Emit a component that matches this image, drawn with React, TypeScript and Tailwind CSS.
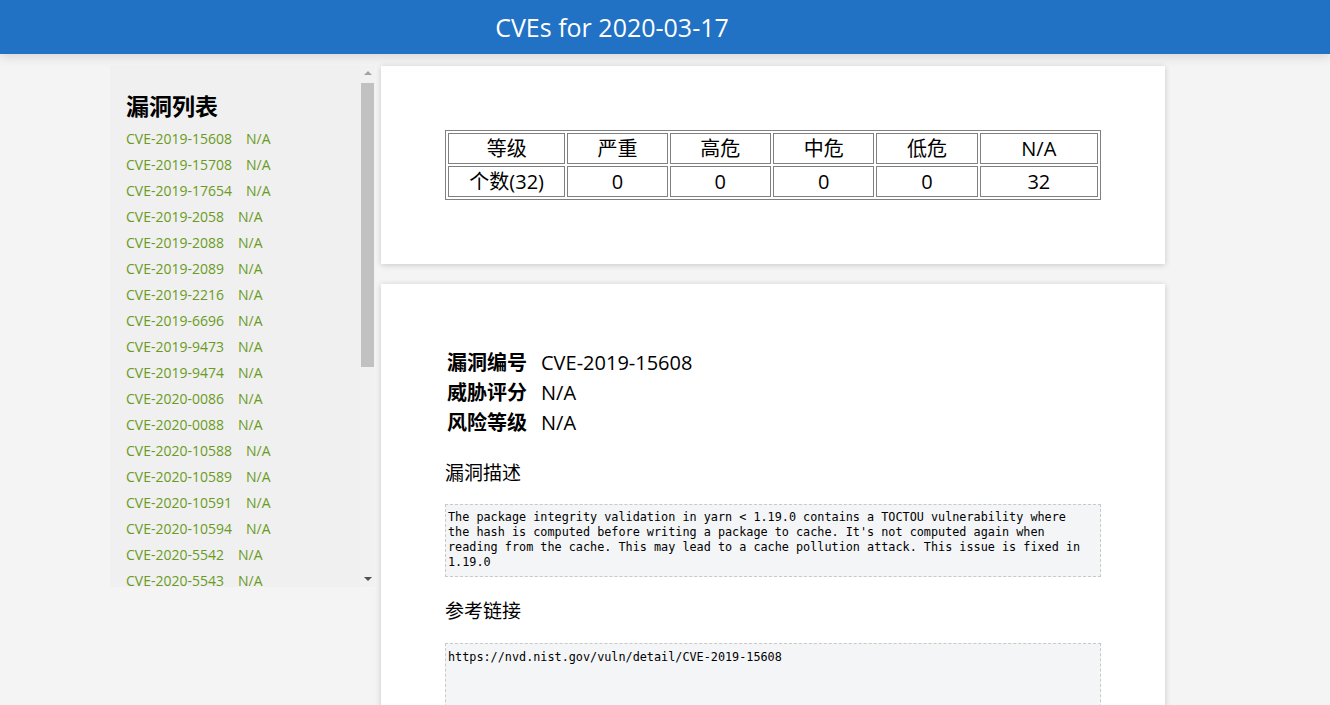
const SANS = 'font-["Open_Sans","Noto_Sans_CJK_SC",sans-serif]';

const CVES = [
  'CVE-2019-15608',
  'CVE-2019-15708',
  'CVE-2019-17654',
  'CVE-2019-2058',
  'CVE-2019-2088',
  'CVE-2019-2089',
  'CVE-2019-2216',
  'CVE-2019-6696',
  'CVE-2019-9473',
  'CVE-2019-9474',
  'CVE-2020-0086',
  'CVE-2020-0088',
  'CVE-2020-10588',
  'CVE-2020-10589',
  'CVE-2020-10591',
  'CVE-2020-10594',
  'CVE-2020-5542',
  'CVE-2020-5543',
];

const LEVELS = ['等级', '严重', '高危', '中危', '低危', 'N/A'];
const COUNTS = ['个数(32)', '0', '0', '0', '0', '32'];
const COL_W = ['w-[118px]', 'w-[101px]', 'w-[102px]', 'w-[102px]', 'w-[102px]', 'w-[119px]'];

const DESCRIPTION = `The package integrity validation in yarn < 1.19.0 contains a TOCTOU vulnerability where
the hash is computed before writing a package to cache. It's not computed again when
reading from the cache. This may lead to a cache pollution attack. This issue is fixed in
1.19.0`;

function Sidebar() {
  return (
    <aside className="flex h-[521px] w-[265px] shrink-0 overflow-hidden bg-[#f0f0f0]">
      <div className="min-w-0 flex-1 overflow-hidden pl-4 pt-[24px]">
        <h2 className="text-[23px] font-bold leading-[32px] text-black">漏洞列表</h2>
        <ul className="mt-[4px]">
          {CVES.map((id) => (
            <li key={id} className="h-[26px] text-[14px] leading-[26px] text-[#6a9b1e]">
              {id}
              <span className="ml-[14px]">N/A</span>
            </li>
          ))}
        </ul>
      </div>
      {/* fake scrollbar */}
      <div className="flex w-[15px] shrink-0 flex-col items-center bg-[#f1f1f1]">
        <span className="mt-[5px] h-0 w-0 border-x-[4px] border-b-[4px] border-x-transparent border-b-[#a3a3a3]" />
        <span className="mt-[8px] h-[284px] w-[13px] bg-[#c1c1c1]" />
        <span className="mt-auto mb-[6px] h-0 w-0 border-x-[4px] border-t-[4px] border-x-transparent border-t-[#505050]" />
      </div>
    </aside>
  );
}

function SummaryCard() {
  return (
    <section className="bg-white px-16 py-16 shadow-[0_1px_6px_rgba(0,0,0,0.18)]">
      <table className="border-separate border-spacing-[2px] border border-[#808080] text-[20px] leading-[29px] text-black">
        <tbody>
          <tr>
            {LEVELS.map((t, i) => (
              <td key={t} className={`${COL_W[i]} border border-[#808080] p-0 text-center`}>
                {t}
              </td>
            ))}
          </tr>
          <tr>
            {COUNTS.map((t, i) => (
              <td key={i} className={`${COL_W[i]} border border-[#808080] p-0 text-center`}>
                {t}
              </td>
            ))}
          </tr>
        </tbody>
      </table>
    </section>
  );
}

function DetailCard() {
  const rows = [
    ['漏洞编号', 'CVE-2019-15608'],
    ['威胁评分', 'N/A'],
    ['风险等级', 'N/A'],
  ];
  return (
    <section className="bg-white px-16 pt-16 pb-10 shadow-[0_1px_6px_rgba(0,0,0,0.18)]">
      <div className="ml-[2px] text-[20px] leading-[30px] text-black">
        {rows.map(([k, v]) => (
          <div key={k} className="flex">
            <span className="w-[94px] font-bold">{k}</span>
            <span>{v}</span>
          </div>
        ))}
      </div>

      <h3 className="mt-[22px] text-[19px] leading-[26px] text-black">漏洞描述</h3>
      <pre className='mt-[18px] whitespace-pre-wrap border border-dashed border-[#c9c9c9] bg-[#f4f5f7] px-[2px] pt-[5px] pb-[6px] font-["DejaVu_Sans_Mono",monospace] text-[11.8px] leading-[15px] text-black'>
        {DESCRIPTION}
      </pre>

      <h3 className="mt-[21px] text-[19px] leading-[26px] text-black">参考链接</h3>
      <pre className='mt-[19px] h-[90px] whitespace-pre-wrap border border-dashed border-[#c9c9c9] bg-[#f4f5f7] px-[2px] pt-[6px] font-["DejaVu_Sans_Mono",monospace] text-[11.8px] leading-[15px] text-black'>
        https://nvd.nist.gov/vuln/detail/CVE-2019-15608
      </pre>
    </section>
  );
}

export default function App() {
  return (
    <div className={`min-h-screen bg-[#f4f4f4] ${SANS}`}>
      <header className="relative z-10 flex h-[54px] items-center justify-center bg-[#2172c4] pr-[106px] shadow-[0_3px_10px_rgba(0,0,0,0.12)]">
        <h1 className="text-[25px] leading-none text-white">CVEs for 2020-03-17</h1>
      </header>

      <div className="ml-[110px] flex w-[1055px] gap-[6px] pt-3">
        <Sidebar />
        <main className="flex w-[784px] flex-col gap-5">
          <SummaryCard />
          <DetailCard />
        </main>
      </div>
    </div>
  );
}
